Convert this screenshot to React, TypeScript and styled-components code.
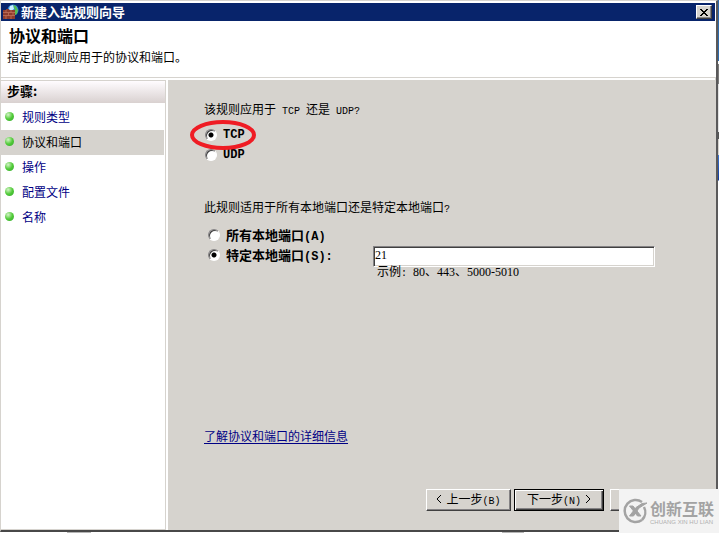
import React, { useState } from 'react';
import styled, { createGlobalStyle } from 'styled-components';

const face = '#d6d3ce';
const cjk = '"Noto Sans CJK SC", sans-serif';

const GlobalStyle = createGlobalStyle`
  * { box-sizing: border-box; }
  body {
    margin: 0;
    color: #000;
    font: 12px/16px ${cjk};
  }
  button, input { font: inherit; color: inherit; }
`;

const Desktop = styled.div`
  display: flex;
  min-height: 100vh;
  padding: 0 1px 1px 0;
  background:
    linear-gradient(#b5b5b5, #b5b5b5) 67px 100% / 24px 1px no-repeat,
    linear-gradient(#b5b5b5, #b5b5b5) 502px 100% / 22px 1px no-repeat,
    linear-gradient(#2f6bac 0 61px, #fff 61px 64px, #7b7b7b 64px 84px, #e2e2e2 84px 132px,
      #555 132px 139px, #d6d3ce 139px 155px, #3d75d0 155px, #10399c 180px, #fff 181px)
      100% 0 / 1px 100% no-repeat,
    #fff;
`;

const Window = styled.div`
  position: relative;
  flex: 1;
  display: flex;
  flex-direction: column;
  background: #fff;
  border-style: solid;
  border-width: 1px 2px 2px 1px;
  border-color: ${face} #5a595a #484848 ${face};
`;

const TitleBar = styled.header`
  display: flex;
  align-items: center;
  gap: 2px;
  height: 18px;
  margin: 2px 1px 1px 0;
  padding: 0 3px 0 2px;
  background: #08246b;
  color: #fff;
`;

const WindowTitle = styled.h1`
  flex: 1;
  margin: 0;
  font-size: 13px;
  line-height: 18px;
`;

const CloseButton = styled.button`
  display: grid;
  place-items: center;
  width: 16px;
  height: 14px;
  padding: 0;
  background: ${face};
  border: 1px solid;
  border-color: #fff #404040 #404040 #fff;
  box-shadow: inset -1px -1px #848284;
`;

const Intro = styled.section`
  height: 56px;
  padding: 4px 6px 0;
  border-bottom: 1px solid ${face};
`;

const PageTitle = styled.h2`
  margin: 0 0 5px 2px;
  font-size: 16px;
  line-height: 18px;
`;

const Summary = styled.p`
  margin: 0;
`;

const Body = styled.div`
  flex: 1;
  display: grid;
  grid-template-columns: 165px minmax(0, 1fr);
  column-gap: 2px;
  padding-top: 2px;
  border-right: 1px solid ${face};
`;

const Sidebar = styled.nav`
  border: solid ${face};
  border-width: 1px 1px 1px 0;
`;

const StepsHeading = styled.h3`
  height: 22px;
  margin: 0;
  padding: 2px 6px;
  font-size: 13px;
  background: linear-gradient(#fffcff, #d9d1d0);
`;

const StepList = styled.ul`
  margin: 2px 1px 0 0;
  padding: 0;
  list-style: none;
`;

const Step = styled.li<{ $current?: boolean }>`
  display: flex;
  align-items: center;
  gap: 8px;
  height: 25px;
  padding: 0 0 2px 4px;
  background: ${({ $current }) => ($current ? face : 'transparent')};
  &::before {
    content: '';
    width: 9px;
    height: 9px;
    border-radius: 50%;
    background: radial-gradient(circle at 35% 30%, #d4f4c8, #52cb39 50%, #31a62b);
  }
`;

const StepLink = styled.a`
  color: #000084;
  text-decoration: none;
  &[aria-current] { color: #000; }
`;

const Main = styled.main`
  display: flex;
  flex-direction: column;
  padding: 21px 20px 19px 36px;
  background: ${face};
`;

const Group = styled.fieldset<{ $gap: number }>`
  min-width: 0;
  margin: 0 0 34px;
  padding: 0;
  border: 0;
  legend {
    height: 16px;
    padding: 0;
    margin-bottom: ${({ $gap }) => $gap}px;
  }
`;

const Latin = styled.span`
  font-family: "Liberation Mono", monospace;
  font-size: 10px;
  line-height: 1;
  white-space: pre;
`;

const BoldLatin = styled(Latin)`
  font-size: 12px;
`;

const Option = styled.label<{ $indent: number }>`
  position: relative;
  display: flex;
  align-items: center;
  gap: 6px;
  width: max-content;
  height: 20px;
  margin-left: ${({ $indent }) => $indent}px;
  font-size: 13px;
  font-weight: 700;
`;

const Radio = styled.input.attrs({ type: 'radio' })`
  appearance: none;
  width: 12px;
  height: 12px;
  margin: 0;
  border: 1px solid;
  border-color: #848284 #fff #fff #848284;
  border-radius: 50%;
  background: #fff;
  box-shadow: inset 1px 1px #404040;
  &:checked {
    background: radial-gradient(circle, #000 0 2px, #fff 3px);
  }
`;

const Highlight = styled.svg`
  position: absolute;
  z-index: 1;
  left: -16px;
  top: -6px;
  width: 68px;
  height: 32px;
  pointer-events: none;
`;

const PortRow = styled.div`
  display: grid;
  grid-template-columns: 169px minmax(0, 282px);
  align-items: start;
`;

const PortField = styled.div`
  padding-top: 1px;
`;

const PortInput = styled.input`
  display: block;
  width: 100%;
  height: 21px;
  padding: 0 1px 2px;
  background: #fff;
  border: 1px solid;
  border-color: #848284 #fff #fff #848284;
  border-radius: 0;
  box-shadow: inset 1px 1px #404040, inset -1px -1px ${face};
  font: 12px "Liberation Serif", serif;
  outline: 0;
`;

const Hint = styled.p`
  height: 16px;
  margin: -3px 0 0 4px;
  font-family: "Liberation Serif", ${cjk};
`;

const HelpLink = styled.a`
  align-self: start;
  margin-top: 114px;
  color: #000084;
  text-underline-offset: 2px;
`;

const Actions = styled.footer`
  display: flex;
  justify-content: flex-end;
  gap: 3px;
  margin-top: auto;
`;

const Button = styled.button<{ $primary?: boolean }>`
  display: flex;
  align-items: center;
  justify-content: center;
  gap: 4px;
  width: ${({ $primary }) => ($primary ? 90 : 85)}px;
  height: 22px;
  margin-right: ${({ $primary }) => ($primary ? 3 : 0)}px;
  padding: 0 0 2px;
  background: ${face};
  border: ${({ $primary }) => ($primary ? '1px solid #000' : '1px solid')};
  border-color: ${({ $primary }) => ($primary ? '#000' : '#fff #404040 #404040 #fff')};
  box-shadow: ${({ $primary }) =>
    $primary
      ? 'inset 1px 1px #fff, inset -1px -1px #404040, inset -2px -2px #848284'
      : 'inset -1px -1px #848284'};
`;

const Watermark = styled.aside`
  position: fixed;
  right: 0;
  bottom: 0;
  display: flex;
  align-items: center;
  gap: 2px;
  width: 100px;
  height: 44px;
  padding-left: 3px;
  background: #f3f3f3;
  color: #a3a3a3;
`;

const BrandName = styled.div`
  font-size: 16px;
  line-height: 22px;
  font-weight: 700;
  white-space: nowrap;
`;

const BrandLatin = styled.div`
  font: 6px/7px "Liberation Sans", sans-serif;
  color: #b0b0b0;
  white-space: nowrap;
`;

function FirewallIcon() {
  return (
    <svg width="16" height="16" viewBox="0 0 16 16" aria-hidden="true">
      <circle cx="10" cy="6" r="5.5" fill="#3187d6" />
      <path d="M10 1l3 1 2 4-1 4-2 1V6z" fill="#55bd52" />
      <path d="M7 2l3-1 1 4-3 2-2-2z" fill="#c9efff" />
      <path d="M0 6h3V5h3v1h6v9H0z" fill="#8f3c2c" />
      <path d="M0 8.5h12M0 11.5h12M3 6v2.5M8 6v2.5M5.5 9v2.5M10 9v2.5M3 12v3M8 12v3" stroke="#c77a62" strokeWidth="0.7" />
    </svg>
  );
}

function CloseIcon() {
  return (
    <svg width="8" height="7" viewBox="0 0 8 7" shapeRendering="crispEdges" aria-hidden="true">
      <path d="M0 0h2v1h1v1h2V1h1V0h2v1H7v1H6v1H5v1h1v1h1v1h1v1H6V6H5V5H3v1H2v1H0V6h1V5h1V4h1V3H2V2H1V1H0z" />
    </svg>
  );
}

function Chevron({ forward }: { forward?: boolean }) {
  return (
    <svg width="6" height="10" viewBox="0 0 6 10" aria-hidden="true">
      <path d={forward ? 'M1 1l4 4-4 4' : 'M5 1L1 5l4 4'} fill="none" stroke="#000" />
    </svg>
  );
}

function BrandIcon() {
  return (
    <svg width="26" height="26" viewBox="0 0 26 26" fill="none" stroke="#a3a3a3" aria-hidden="true">
      <path d="M20 4A11 11 0 1 0 20 22" strokeWidth="2.5" />
      <path d="M22 9a11 11 0 0 1-2 13" strokeWidth="2.5" />
      <path d="M7.5 8h3.5l8 10h-3.5z" fill="#a3a3a3" strokeWidth="1" />
      <path d="M7.5 18h4L17 10l8-5-5 .5-6 4z" fill="#a3a3a3" strokeWidth="1" />
    </svg>
  );
}

const steps = ['规则类型', '协议和端口', '操作', '配置文件', '名称'];

export default function App() {
  const [protocol, setProtocol] = useState('tcp');
  const [scope, setScope] = useState('specific');
  const [ports, setPorts] = useState('21');

  return (
    <Desktop>
      <GlobalStyle />
      <Window>
        <TitleBar>
          <FirewallIcon />
          <WindowTitle>新建入站规则向导</WindowTitle>
          <CloseButton type="button" aria-label="关闭"><CloseIcon /></CloseButton>
        </TitleBar>
        <Intro>
          <PageTitle>协议和端口</PageTitle>
          <Summary>指定此规则应用于的协议和端口。</Summary>
        </Intro>
        <Body>
          <Sidebar>
            <StepsHeading>步骤:</StepsHeading>
            <StepList>
              {steps.map((step, i) => (
                <Step key={step} $current={i === 1}>
                  <StepLink href="#" aria-current={i === 1 ? 'step' : undefined}>{step}</StepLink>
                </Step>
              ))}
            </StepList>
          </Sidebar>
          <Main>
            <Group $gap={8}>
              <legend>该规则应用于<Latin> TCP </Latin>还是<Latin> UDP?</Latin></legend>
              <Option $indent={1}>
                <Radio name="protocol" checked={protocol === 'tcp'} onChange={() => setProtocol('tcp')} />
                <BoldLatin>TCP</BoldLatin>
                <Highlight viewBox="0 0 68 32" aria-hidden="true">
                  <ellipse cx="34" cy="16" rx="31" ry="13" fill="none" stroke="#ef1c24" strokeWidth="4" />
                </Highlight>
              </Option>
              <Option $indent={1}>
                <Radio name="protocol" checked={protocol === 'udp'} onChange={() => setProtocol('udp')} />
                <BoldLatin>UDP</BoldLatin>
              </Option>
            </Group>
            <Group $gap={10}>
              <legend>此规则适用于所有本地端口还是特定本地端口<Latin>?</Latin></legend>
              <Option $indent={4}>
                <Radio name="scope" checked={scope === 'all'} onChange={() => setScope('all')} />
                <span>所有本地端口<BoldLatin>(A)</BoldLatin></span>
              </Option>
              <PortRow>
                <Option $indent={4}>
                  <Radio name="scope" checked={scope === 'specific'} onChange={() => setScope('specific')} />
                  <span>特定本地端口<BoldLatin>(S):</BoldLatin></span>
                </Option>
                <PortField>
                  <PortInput aria-label="特定本地端口" value={ports} onChange={(e) => setPorts(e.target.value)} />
                  <Hint>示例<Latin>: </Latin>80、443、5000-5010</Hint>
                </PortField>
              </PortRow>
            </Group>
            <HelpLink href="#">了解协议和端口的详细信息</HelpLink>
            <Actions>
              <Button type="button"><Chevron /><span>上一步<Latin>(B)</Latin></span></Button>
              <Button type="button" $primary><span>下一步<Latin>(N)</Latin></span><Chevron forward /></Button>
              <Button type="button" aria-label="取消" />
            </Actions>
          </Main>
        </Body>
      </Window>
      <Watermark>
        <BrandIcon />
        <div>
          <BrandName>创新互联</BrandName>
          <BrandLatin>CHUANG XIN HU LIAN</BrandLatin>
        </div>
      </Watermark>
    </Desktop>
  );
}
